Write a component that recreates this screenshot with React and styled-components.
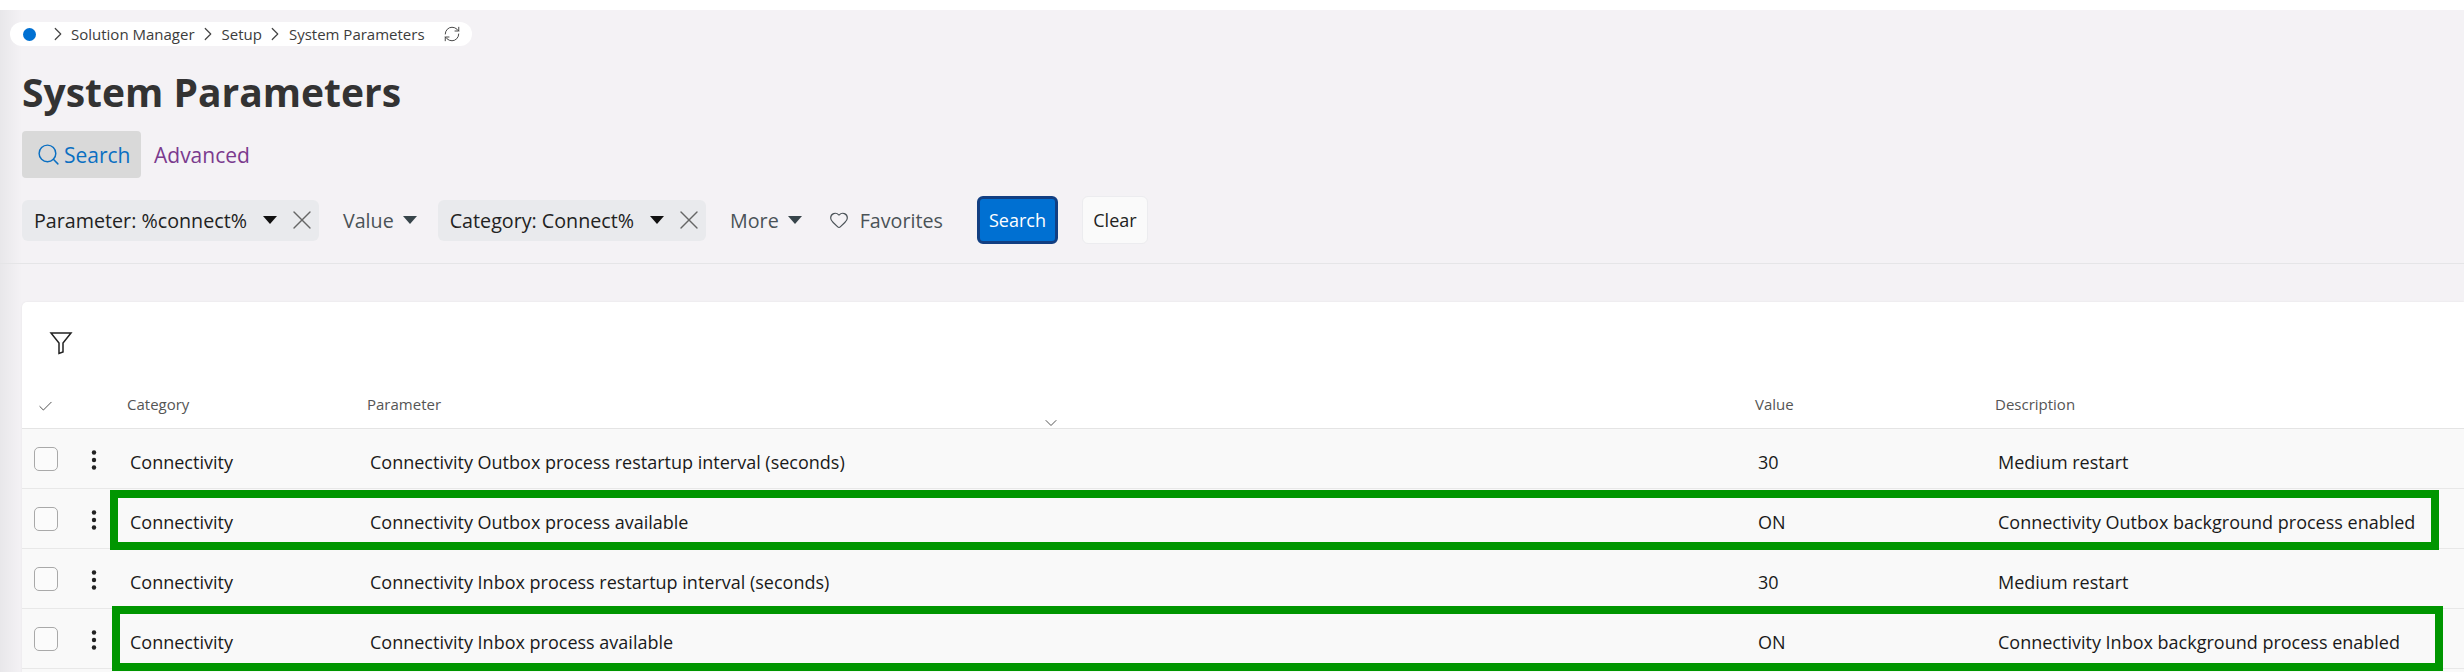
import { createGlobalStyle } from "styled-components"
import styled from "styled-components"
import { Search, RefreshCw, ChevronRight, ChevronDown, X, Heart, Check } from "lucide-react"

const rows = [
    { parameter: "Connectivity Outbox process restartup interval (seconds)", value: "30", description: "Medium restart" },
    { parameter: "Connectivity Outbox process available", value: "ON", description: "Connectivity Outbox background process enabled", box: { top: 1, bottom: -2, left: 88, right: 25 } },
    { parameter: "Connectivity Inbox process restartup interval (seconds)", value: "30", description: "Medium restart" },
    { parameter: "Connectivity Inbox process available", value: "ON", description: "Connectivity Inbox background process enabled", box: { top: -3, bottom: -3, left: 90, right: 21 } },
]

const Funnel = () => (
    <svg width="24" height="24" viewBox="0 0 24 24" fill="none" stroke="#222" strokeWidth="1.5">
        <path d="M2 2h20l-8 10V21l-4 1.5V12z" />
    </svg>
)

const Kebab = () => (
    <svg width="6" height="20" viewBox="0 0 6 20" fill="#222">
        <circle cx="3" cy="2.5" r="2.2" />
        <circle cx="3" cy="10" r="2.2" />
        <circle cx="3" cy="17.5" r="2.2" />
    </svg>
)

export default function App() {
    return (
        <Page>
            <GlobalStyle />
            <TopBand />
            <Content>
                <Breadcrumb>
                    <HomeDot />
                    <Crumb><ChevronRight size={22} strokeWidth={1.3} />Solution Manager</Crumb>
                    <Crumb><ChevronRight size={22} strokeWidth={1.3} />Setup</Crumb>
                    <Crumb><ChevronRight size={22} strokeWidth={1.3} />System Parameters</Crumb>
                    <Refresh><RefreshCw size={18} strokeWidth={1.3} /></Refresh>
                </Breadcrumb>
                <Title>System Parameters</Title>
                <Tabs>
                    <SearchTab><Search size={25} strokeWidth={1.4} />Search</SearchTab>
                    <AdvancedTab>Advanced</AdvancedTab>
                </Tabs>
                <Filters>
                    <Chip>
                        Parameter: %connect%
                        <Caret $gap={16} />
                        <ChipClose><X size={32} strokeWidth={1} /></ChipClose>
                    </Chip>
                    <PlainFilter $left={24}>Value<Caret $muted /></PlainFilter>
                    <Chip $left={21}>
                        Category: Connect%
                        <Caret $gap={16} />
                        <ChipClose><X size={32} strokeWidth={1} /></ChipClose>
                    </Chip>
                    <PlainFilter $left={24}>More<Caret $muted /></PlainFilter>
                    <PlainFilter $left={27}><Heart size={20} strokeWidth={1.4} />Favorites</PlainFilter>
                    <PrimaryButton>Search</PrimaryButton>
                    <ClearButton>Clear</ClearButton>
                </Filters>
            </Content>
            <Divider />
            <Card>
                <Toolbar><Funnel /></Toolbar>
                <HeaderRow>
                    <LeadCell><HeaderCheck><Check size={17} strokeWidth={1.2} /></HeaderCheck></LeadCell>
                    <HeaderCell>Category</HeaderCell>
                    <HeaderCell>
                        Parameter
                        <SortMark><ChevronDown size={20} strokeWidth={1.2} /></SortMark>
                    </HeaderCell>
                    <HeaderCell>Value</HeaderCell>
                    <HeaderCell>Description</HeaderCell>
                </HeaderRow>
                {rows.map((row) => (
                    <Row key={row.parameter}>
                        <LeadCell>
                            <Checkbox />
                            <MenuButton><Kebab /></MenuButton>
                        </LeadCell>
                        <Cell>Connectivity</Cell>
                        <Cell>{row.parameter}</Cell>
                        <Cell>{row.value}</Cell>
                        <Cell>{row.description}</Cell>
                        {row.box && <Callout $box={row.box} />}
                    </Row>
                ))}
                <Row />
            </Card>
        </Page>
    )
}

const GlobalStyle = createGlobalStyle`
    html, body {
        margin: 0;
        padding: 0;
        background: #fff;
    }
    * {
        box-sizing: border-box;
    }
`
const Page = styled.div`
    width: 2464px;
    height: 672px;
    overflow: hidden;
    font-family: "Open Sans", "Noto Sans", sans-serif;
    color: #222;
    background: linear-gradient(90deg, #e8e7ea 0, #f4f2f5 22px);
`
const TopBand = styled.div`
    height: 10px;
    background: #fff;
`
const Content = styled.div`
    padding: 12px 0 0 22px;
`
const Breadcrumb = styled.nav`
    display: flex;
    align-items: center;
    width: 462px;
    height: 24px;
    margin-left: -12px;
    padding-left: 13px;
    border-radius: 12px;
    background: #fff;
    color: #3c3c3c;
    font-size: 15px;
`
const HomeDot = styled.span`
    width: 13px;
    height: 13px;
    margin-right: 14px;
    border-radius: 50%;
    background: #0070d2;
`
const Crumb = styled.span`
    display: flex;
    align-items: center;
    gap: 6px;
    margin-right: 6px;
    white-space: nowrap;
    svg {
        margin: 0 -3.5px;
        color: #444;
    }
`
const Refresh = styled.span`
    display: flex;
    margin-left: 12px;
    color: #444;
`
const Title = styled.h1`
    margin: 17px 0 0;
    font-size: 39px;
    line-height: 58px;
    font-weight: 700;
    color: #333;
`
const Tabs = styled.div`
    display: flex;
    align-items: center;
    margin-top: 10px;
`
const SearchTab = styled.div`
    display: flex;
    align-items: center;
    gap: 3px;
    width: 119px;
    height: 47px;
    padding-left: 14px;
    border-radius: 4px;
    background: #d9d9d9;
    color: #0a6fc2;
    font-size: 21px;
`
const AdvancedTab = styled.div`
    margin-left: 13px;
    color: #7b3a8e;
    font-size: 21px;
`
const Filters = styled.div`
    display: flex;
    align-items: center;
    height: 48px;
    margin-top: 18px;
    font-size: 19.7px;
`
const Chip = styled.div`
    display: flex;
    align-items: center;
    height: 41px;
    margin-left: ${(props) => props.$left || 0}px;
    padding: 0 1px 0 12px;
    border-radius: 6px;
    background: #e9eaed;
    color: #222;
    white-space: nowrap;
`
const Caret = styled.span`
    width: 0;
    height: 0;
    margin-left: ${(props) => props.$gap}px;
    border-left: 7.5px solid transparent;
    border-right: 7.5px solid transparent;
    border-top: 8px solid ${(props) => (props.$muted ? "#37444a" : "#111")};
`
const ChipClose = styled.span`
    display: flex;
    margin-left: 9px;
    color: #666;
`
const PlainFilter = styled.div`
    display: flex;
    align-items: center;
    gap: 11px;
    margin-left: ${(props) => props.$left}px;
    color: #4a5257;
    white-space: nowrap;
    ${Caret} {
        margin-left: -2px;
    }
`
const PrimaryButton = styled.button`
    width: 81px;
    height: 48px;
    margin-left: 34px;
    padding: 0;
    border: 3px solid #123f82;
    border-radius: 6px;
    background: #0070d2;
    color: #fff;
    font: 18px "Open Sans", sans-serif;
`
const ClearButton = styled.button`
    width: 66px;
    height: 48px;
    margin-left: 24px;
    padding: 0;
    border: 1px solid #ececef;
    border-radius: 6px;
    background: #fafafa;
    color: #222;
    font: 18px "Open Sans", sans-serif;
`
const Divider = styled.div`
    height: 1px;
    margin-top: 19px;
    background: #e5e5e7;
`
const Card = styled.section`
    margin: 38px 0 0 22px;
    border-radius: 5px 0 0 0;
    background: #fff;
    box-shadow: 0 0 2px rgba(0, 0, 0, 0.08);
`
const Toolbar = styled.div`
    display: flex;
    align-items: center;
    height: 82px;
    padding: 0 0 0 27px;
`
const columns = "105px 240px 1388px 240px 1fr"
const HeaderRow = styled.div`
    display: grid;
    grid-template-columns: ${columns};
    align-items: center;
    height: 45px;
    padding-bottom: 5px;
    border-bottom: 1px solid #e4e4e4;
`
const HeaderCell = styled.div`
    position: relative;
    color: #555;
    font-size: 15px;
`
const SortMark = styled.span`
    position: absolute;
    left: 674px;
    top: 19px;
    color: #555;
`
const LeadCell = styled.div`
    display: flex;
    align-items: center;
    padding-left: 12px;
`
const HeaderCheck = styled.span`
    display: flex;
    margin: 6px 0 0 3px;
    color: #333;
`
const Row = styled.div`
    position: relative;
    display: grid;
    grid-template-columns: ${columns};
    align-items: center;
    height: 60px;
    border-bottom: 1px solid #e8e8e8;
    background: #f9f9f9;
`
const Cell = styled.div`
    padding: 6px 0 0 3px;
    color: #1a1a1a;
    font-size: 18px;
    white-space: nowrap;
`
const Checkbox = styled.span`
    width: 24px;
    height: 24px;
    border: 1px solid #a9a9a9;
    border-radius: 5px;
    background: #fbfbfb;
`
const MenuButton = styled.span`
    display: flex;
    margin: 2px 0 0 33px;
`
const Callout = styled.div`
    position: absolute;
    z-index: 1;
    top: ${(props) => props.$box.top}px;
    bottom: ${(props) => props.$box.bottom}px;
    left: ${(props) => props.$box.left}px;
    right: ${(props) => props.$box.right}px;
    border: 8px solid #009600;
    pointer-events: none;
`
